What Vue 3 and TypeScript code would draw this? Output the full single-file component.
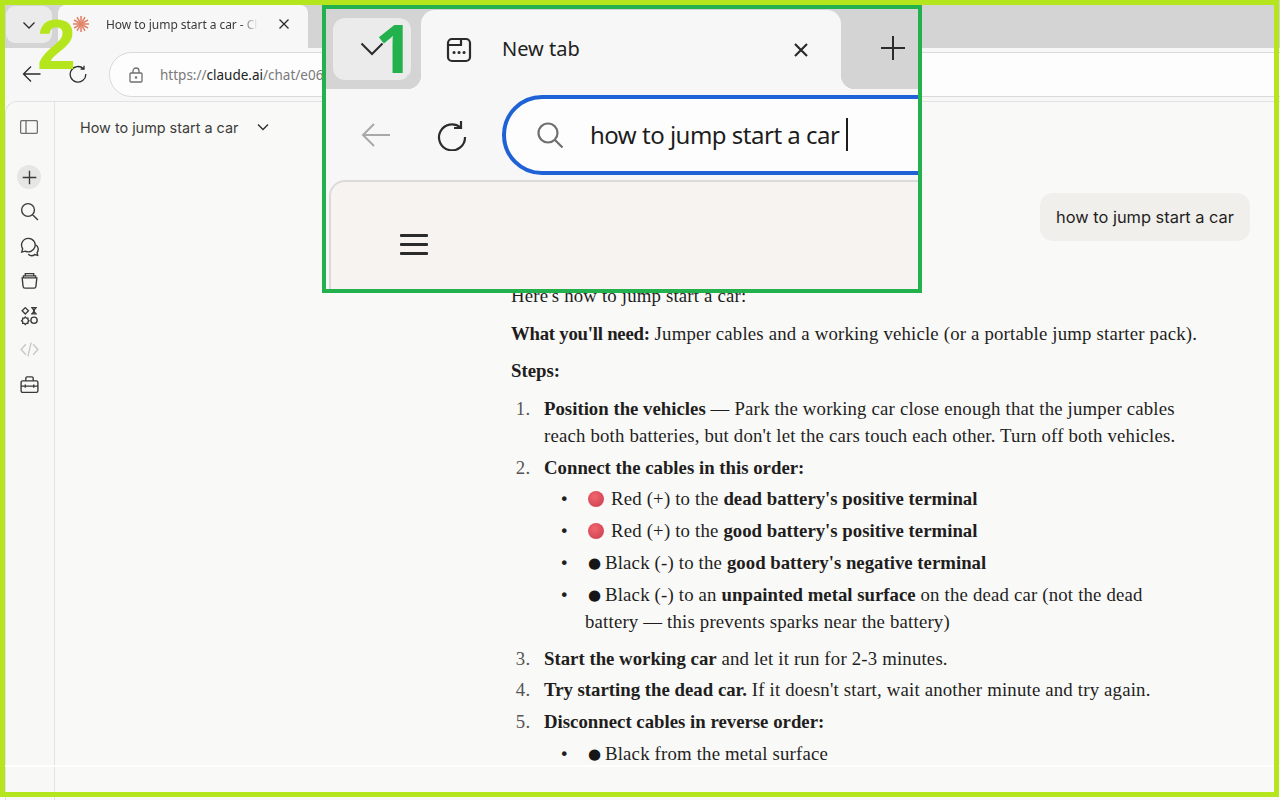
<script setup lang="ts">
interface NavIcon {
  name: string
  d: string
  muted?: boolean
  active?: boolean
}

// left rail of the chat page
const navIcons: NavIcon[] = [
  { name: 'new', d: 'M10 3.5v13M3.5 10h13', active: true },
  { name: 'search', d: 'M8.6 2.5a6.1 6.1 0 1 0 0 12.2a6.1 6.1 0 0 0 0-12.2zM13 13l5 5' },
  {
    name: 'chats',
    d: 'M9 2.2a6.4 6.4 0 0 1 6 8.6a6.4 6.4 0 0 1-9 3.6l-3.4.9l.9-3.2a6.4 6.4 0 0 1 5.5-9.9zM16.2 8.6a5 5 0 0 1 1 7.2l.6 2.6l-2.8-.7a5 5 0 0 1-6.2-.4'
  },
  {
    name: 'projects',
    d: 'M3 7.5h14l-.9 8.2a1.8 1.8 0 0 1-1.8 1.6H5.7a1.8 1.8 0 0 1-1.8-1.6zM4.2 7.5V5.6h11.6v1.9M6 5.6V3.4h8v2.2'
  },
  {
    name: 'artifacts',
    d: 'M6 2.5l3 3l-3 3l-3-3zM11.5 2.5h5.5M11.5 8.5h5.5M12.5 2.5l2 3l-2 3M16 2.5l-2 3l2 3M14.3 11.5a3 3 0 1 0 0 6a3 3 0 0 0 0-6zM6 11.5l1 1h1.5v1.5l1 1l-1 1v1.5H7l-1 1l-1-1H3.5v-1.5l-1-1l1-1V12.500H5z'
  },
  { name: 'code', d: 'M6.5 5L2 10l4.5 5M13.5 5L18 10l-4.5 5M11.5 3.5l-3 13', muted: true },
  {
    name: 'tools',
    d: 'M3.5 6.5h13a1.5 1.5 0 0 1 1.5 1.5v8a1.5 1.5 0 0 1-1.5 1.5h-13A1.5 1.5 0 0 1 2 16V8a1.5 1.5 0 0 1 1.5-1.5zM6.5 6.5V4a1.2 1.2 0 0 1 1.2-1.2h4.6A1.2 1.2 0 0 1 13.5 4v2.5M2 11.5h16M6 10v3M14 10v3'
  }
]

// rays of the small tab favicon
const rays: number[] = Array.from({ length: 12 }, (_, i) => i * 30)
</script>

<template>
  <div class="screen">
    <!-- the browser in the background -->
    <div class="tabstrip">
      <div class="tab-toggle">
        <svg width="14" height="14" viewBox="0 0 14 14" class="ico"><path d="M1.5 4.5L7 10l5.5-5.5" /></svg>
      </div>
      <div class="tab">
        <svg class="favicon" width="18" height="18" viewBox="0 0 18 18">
          <line v-for="r in rays" :key="r" x1="9" y1="9" x2="9" y2="1" :transform="`rotate(${r} 9 9)`" />
        </svg>
        <span class="tab-title">How to jump start a car - Claude</span>
        <svg width="12" height="12" viewBox="0 0 12 12" class="ico"><path d="M1.5 1.5l9 9M10.5 1.5l-9 9" /></svg>
      </div>
    </div>

    <div class="toolbar">
      <svg width="20" height="18" viewBox="0 0 20 18" class="ico"><path d="M18.5 9H1.5M9 1.5L1.5 9L9 16.5" /></svg>
      <svg width="18" height="18" viewBox="0 0 18 18" class="ico"><path d="M14.5 3.8A7.8 7.8 0 1 0 16.8 9M15 .8v3.4h-3.4" /></svg>
      <div class="address">
        <svg width="14" height="16" viewBox="0 0 14 16" class="ico ico-grey">
          <path d="M2 6h10a1 1 0 0 1 1 1v7a1 1 0 0 1-1 1H2a1 1 0 0 1-1-1V7a1 1 0 0 1 1-1zM4 6V4a3 3 0 0 1 6 0v2" />
          <circle cx="7" cy="10.5" r=".6" />
        </svg>
        <span class="url"><span class="dim">https://</span>claude.ai<span class="dim">/chat/e06f41c7</span></span>
      </div>
    </div>

    <div class="page">
      <aside class="rail">
        <div class="rail-top">
          <svg width="18" height="14" viewBox="0 0 18 14" class="ico ico-grey">
            <rect x=".6" y=".6" width="16.8" height="12.8" rx="1.5" />
            <path d="M6 .6v12.8" />
          </svg>
        </div>
        <div class="rail-nav">
          <div v-for="icon in navIcons" :key="icon.name" class="nav-item" :class="{ active: icon.active, muted: icon.muted }">
            <svg width="21" height="21" viewBox="0 0 20 20" class="ico"><path :d="icon.d" /></svg>
          </div>
        </div>
      </aside>

      <main class="main">
        <header class="chat-head">
          <span>How to jump start a car</span>
          <svg width="12" height="12" viewBox="0 0 12 12" class="ico"><path d="M1 3.5l5 5l5-5" /></svg>
        </header>

        <section class="chat">
          <div class="bubble">how to jump start a car</div>

          <div class="reply">
            <p>Here's how to jump start a car:</p>
            <p><strong class="need">What you'll need:</strong> Jumper cables and a working vehicle (or a portable jump starter pack).</p>
            <p><strong>Steps:</strong></p>
            <ol>
              <li>
                <strong>Position the vehicles</strong> — Park the working car close enough that the jumper cables reach both
                batteries, but don't let the cars touch each other. Turn off both vehicles.
              </li>
              <li>
                <strong>Connect the cables in this order:</strong>
                <ul>
                  <li><i class="red"></i>Red (+) to the <strong>dead battery's positive terminal</strong></li>
                  <li><i class="red"></i>Red (+) to the <strong>good battery's positive terminal</strong></li>
                  <li><span class="blk">●</span>Black (-) to the <strong>good battery's negative terminal</strong></li>
                  <li>
                    <span class="blk">●</span>Black (-) to an <strong>unpainted metal surface</strong> on the dead car (not
                    the dead<br />battery — this prevents sparks near the battery)
                  </li>
                </ul>
              </li>
              <li><strong>Start the working car</strong> and let it run for 2-3 minutes.</li>
              <li><strong>Try starting the dead car.</strong> If it doesn't start, wait another minute and try again.</li>
              <li>
                <strong>Disconnect cables in reverse order:</strong>
                <ul>
                  <li><span class="blk">●</span>Black from the metal surface</li>
                </ul>
              </li>
            </ol>
          </div>
        </section>
      </main>
    </div>

    <div class="strip-line"></div>

    <!-- zoomed callout 1 on top of the browser -->
    <div class="callout">
      <div class="c-strip">
        <div class="c-toggle">
          <svg width="24" height="14" viewBox="0 0 24 14" class="ico"><path d="M1.5 1.5L12 12L22.5 1.5" /></svg>
        </div>
        <div class="c-tab">
          <svg width="26" height="26" viewBox="0 0 26 26" class="ico ico-thick">
            <rect x="2" y="2" width="22" height="22" rx="4" />
            <path d="M2 8h13V2" />
            <path class="dots" d="M8 15.5h.1M13 15.5h.1M18 15.5h.1" />
          </svg>
          <span class="c-tab-title">New tab</span>
          <svg width="16" height="16" viewBox="0 0 16 16" class="ico ico-thick"><path d="M2 2l12 12M14 2L2 14" /></svg>
        </div>
        <svg class="c-plus ico" width="26" height="26" viewBox="0 0 26 26"><path d="M13 1v24M1 13h24" /></svg>
      </div>

      <div class="c-toolbar">
        <svg width="30" height="26" viewBox="0 0 30 26" class="ico ico-light"><path d="M29 13H2M13 2L2 13l11 11" /></svg>
        <svg class="c-reload ico ico-thick" width="30" height="32" viewBox="0 0 30 32"><path d="M23.5 8.5A13 13 0 1 0 28 18M24 2v7h-7" /></svg>
        <div class="c-search">
          <svg width="28" height="28" viewBox="0 0 28 28" class="ico ico-grey ico-thick"><path d="M12 2.5a9.5 9.5 0 1 0 0 19a9.5 9.5 0 0 0 0-19zM19 19l7.5 7.5" /></svg>
          <span class="c-query">how to jump start a car</span>
          <span class="caret"></span>
        </div>
      </div>

      <div class="c-page">
        <div class="burger"><span></span><span></span><span></span></div>
      </div>
    </div>

    <span class="num num-one">1</span>
    <span class="num num-two">2</span>
    <div class="frame"></div>
  </div>
</template>

<style>
html,
body {
  margin: 0;
  background: #f9f9f8;
}
</style>

<style scoped>
.screen {
  position: relative;
  width: 1280px;
  height: 800px;
  overflow: hidden;
  display: flex;
  flex-direction: column;
  background: #f9f9f8;
  font-family: Inter, 'Liberation Sans', sans-serif;
  color: #1f1e1d;
}

.ico {
  fill: none;
  stroke: #2b2b2b;
  stroke-width: 1.3;
  flex: none;
}
.ico-grey {
  stroke: #6f6f6f;
}
.ico-thick {
  stroke-width: 2.2;
}
.ico-light {
  stroke: #a9a9a9;
  stroke-width: 2;
}
.dots {
  stroke-width: 3;
  stroke-linecap: round;
}

/* background browser */
.tabstrip {
  flex: none;
  height: 48px;
  box-sizing: border-box;
  padding: 5px 0 0 6px;
  background: #d4d4d4;
  display: flex;
  font-family: 'Noto Sans', sans-serif;
}
.tab-toggle {
  width: 46px;
  height: 37px;
  margin-top: 1px;
  border-radius: 9px;
  background: #ebebeb;
  display: flex;
  align-items: center;
  justify-content: center;
}
.tab {
  position: relative;
  width: 250px;
  margin-left: 6px;
  box-sizing: border-box;
  padding: 0 18px 5px 14px;
  background: #f7f7f7;
  border-radius: 8px 8px 0 0;
  display: flex;
  align-items: center;
}
.favicon {
  flex: none;
  stroke: #e2856b;
  stroke-width: 1.6;
}
.tab-title {
  flex: 1;
  margin-left: 16px;
  margin-right: 20px;
  overflow: hidden;
  white-space: nowrap;
  font-size: 12px;
  letter-spacing: -0.05px;
  color: #3a3a3a;
  -webkit-mask-image: linear-gradient(to right, #000 88%, transparent 100%);
  mask-image: linear-gradient(to right, #000 88%, transparent 100%);
}

.toolbar {
  flex: none;
  height: 53px;
  box-sizing: border-box;
  padding: 4px 0 4px 22px;
  background: #f7f7f7;
  display: flex;
  align-items: center;
  gap: 27px;
  font-family: 'Noto Sans', sans-serif;
}
.toolbar > svg {
  margin-top: -1px;
}
.address {
  flex: 1;
  height: 45px;
  margin-left: -5px;
  margin-right: -30px;
  box-sizing: border-box;
  padding-left: 19px;
  background: #fdfdfd;
  border: 1px solid #d9d9d9;
  border-radius: 23px;
  display: flex;
  align-items: center;
  gap: 17px;
}
.url {
  font-size: 13.5px;
  color: #222;
}
.dim {
  color: #7a7a7a;
}

.page {
  flex: 1;
  min-height: 0;
  display: flex;
  border-top: 1px solid #e2e2e2;
  border-left: 1px solid #e2e2e2;
  border-top-left-radius: 12px;
  margin-left: 5px;
  background: #f9f9f8;
}
.rail {
  flex: none;
  width: 48px;
  background: #f8f8f7;
  border-right: 1px solid #e3e3e1;
  border-top-left-radius: 12px;
}
.rail-top {
  height: 50px;
  padding-right: 2px;
  display: flex;
  align-items: center;
  justify-content: center;
}
.rail-nav {
  margin-top: 13px;
  padding-right: 2px;
  display: flex;
  flex-direction: column;
  align-items: center;
  gap: 10.5px;
}
.nav-item {
  width: 24px;
  height: 24px;
  border-radius: 50%;
  display: flex;
  align-items: center;
  justify-content: center;
}
.nav-item .ico {
  stroke: #3a3a38;
}
.nav-item.active {
  background: #e6e6e4;
}
.nav-item.muted .ico {
  stroke: #c8c8c6;
}

.main {
  flex: 1;
  min-width: 0;
  display: flex;
  flex-direction: column;
}
.chat-head {
  flex: none;
  height: 50px;
  box-sizing: border-box;
  padding-left: 25px;
  display: flex;
  align-items: center;
  gap: 19px;
  font-size: 14.4px;
  color: #3d3d3a;
}
.chat {
  flex: none;
  padding: 41px 30px 0 456px;
  display: flex;
  flex-direction: column;
}
.bubble {
  align-self: flex-end;
  height: 48px;
  box-sizing: border-box;
  padding: 0 16px;
  background: #f0efec;
  border-radius: 13px;
  font-size: 16.4px;
  line-height: 49px;
}
.reply {
  width: 700px;
  margin-top: 41px;
  font-family: 'Liberation Serif', serif;
  font-size: 18.8px;
  letter-spacing: 0.18px;
  line-height: 27.4px;
  color: #1f1e1d;
}
.reply strong {
  letter-spacing: 0;
}
.reply strong.need {
  letter-spacing: -0.25px;
}
.reply p {
  margin: 0 0 10.2px;
}
.reply ol {
  margin: 0;
  padding-left: 33px;
}
.reply ul {
  margin: 4.1px 0 0;
  padding: 0 0 0.1px 41px;
}
.reply li {
  margin-bottom: 4.4px;
}
.reply ol > li::marker {
  content: counter(list-item) '.\00a0\00a0\2009';
  color: #555;
}
.reply ul > li::marker {
  content: '•\00a0\00a0\00a0';
  font-family: 'DejaVu Sans', sans-serif;
  font-size: 16px;
  color: #1f1e1d;
}
.red {
  display: inline-block;
  width: 16px;
  height: 16px;
  margin: 0 7px 0 3px;
  vertical-align: -2px;
  border-radius: 50%;
  background: radial-gradient(circle at 40% 35%, #f0666f, #c93a4b);
}
.blk {
  display: inline-block;
  width: 17px;
  margin-left: 3px;
  font-family: 'DejaVu Sans', sans-serif;
  font-size: 15px;
  line-height: 1;
  vertical-align: 1px;
  color: #161616;
}

.strip-line {
  position: absolute;
  left: 5px;
  right: 0;
  top: 765px;
  height: 2px;
  background: #fff;
}

/* callout 1 */
.callout {
  position: absolute;
  left: 322px;
  top: 5px;
  width: 600px;
  height: 288px;
  box-sizing: border-box;
  border: 4px solid #22b14c;
  background: #f7f7f7;
  display: flex;
  flex-direction: column;
  overflow: hidden;
  font-family: 'Noto Sans', 'Open Sans', sans-serif;
}
.c-strip {
  flex: none;
  height: 80px;
  background: #d4d4d4;
  display: flex;
  align-items: flex-end;
  padding-left: 7px;
}
.c-toggle {
  width: 78px;
  height: 62px;
  margin-bottom: 9px;
  border-radius: 12px;
  background: #ebebeb;
  display: flex;
  align-items: center;
  justify-content: center;
  box-sizing: border-box;
}
.c-toggle .ico {
  margin-right: 1px;
  stroke-width: 2;
}
.c-tab {
  position: relative;
  width: 420px;
  height: 79px;
  margin-left: 10px;
  box-sizing: border-box;
  padding: 0 32px 0 25px;
  background: #f7f7f7;
  border-radius: 14px 14px 0 0;
  display: flex;
  align-items: center;
}
.c-tab::before,
.c-tab::after {
  content: '';
  position: absolute;
  bottom: 0;
  width: 14px;
  height: 14px;
}
.c-tab::before {
  left: -14px;
  background: radial-gradient(circle at 0 0, #d4d4d4 14px, #f7f7f7 14.5px);
}
.c-tab::after {
  right: -14px;
  background: radial-gradient(circle at 100% 0, #d4d4d4 14px, #f7f7f7 14.5px);
}
.c-tab-title {
  flex: 1;
  margin-left: 30px;
  margin-bottom: 2px;
  font-size: 20px;
  color: #222;
}
.c-plus {
  margin: 0 0 28px 39px;
  stroke-width: 2;
}
.c-toolbar {
  flex: none;
  height: 91px;
  display: flex;
  align-items: center;
  padding-left: 35px;
}
.c-reload {
  margin-left: 46px;
}
.c-search {
  flex: none;
  width: 460px;
  height: 80px;
  margin-left: 35px;
  box-sizing: border-box;
  padding-left: 30px;
  background: #fdfdfd;
  border: 4px solid #1f62d6;
  border-radius: 40px;
  display: flex;
  align-items: center;
}
.c-query {
  margin-left: 26px;
  font-size: 24px;
  letter-spacing: -0.5px;
  color: #1d1d1d;
  white-space: nowrap;
}
.caret {
  width: 2px;
  height: 33px;
  margin-left: 7px;
  background: #1d1d1d;
}
.c-page {
  flex: 1;
  margin-left: 3px;
  box-sizing: border-box;
  padding: 52px 0 0 69px;
  background: #f6f3f0;
  border: 2px solid #dadada;
  border-right: 0;
  border-bottom: 0;
  border-top-left-radius: 16px;
}
.burger {
  width: 28px;
  display: flex;
  flex-direction: column;
  gap: 6px;
}
.burger span {
  height: 3px;
  border-radius: 1px;
  background: #2a2a2a;
}

.num {
  position: absolute;
  font-family: 'Noto Sans', sans-serif;
  font-weight: 700;
  line-height: 1;
}
.num-one {
  left: 375px;
  top: 14px;
  font-size: 67px;
  color: #22b14c;
}
.num-two {
  left: 37px;
  top: 10px;
  font-family: 'Liberation Sans', sans-serif;
  font-size: 70px;
  color: #b5e61d;
}
.frame {
  position: absolute;
  left: 0;
  top: 0;
  width: 1279px;
  height: 797px;
  box-sizing: border-box;
  border: 5px solid #b5e61d;
  pointer-events: none;
}
</style>
